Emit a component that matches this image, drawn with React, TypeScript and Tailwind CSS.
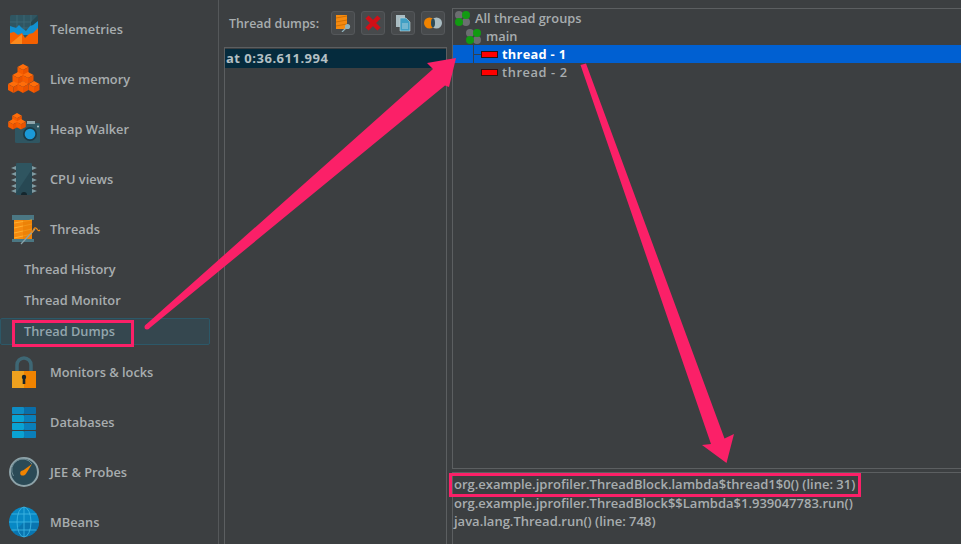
import React from "react";

const Cube = ({ x, y, s = 5.5 }: { x: number; y: number; s?: number }) => (
  <g>
    <polygon points={`${x},${y} ${x + s},${y + s * 0.55} ${x},${y + s * 1.1} ${x - s},${y + s * 0.55}`} fill="#ff6d0a" />
    <polygon points={`${x - s},${y + s * 0.55} ${x},${y + s * 1.1} ${x},${y + s * 2.2} ${x - s},${y + s * 1.65}`} fill="#f65c00" />
    <polygon points={`${x + s},${y + s * 0.55} ${x},${y + s * 1.1} ${x},${y + s * 2.2} ${x + s},${y + s * 1.65}`} fill="#ea5300" />
  </g>
);

const Telemetries = () => (
  <svg width="32" height="32" viewBox="0 0 32 32">
    <rect x="2" y="2" width="28" height="29" rx="1.5" fill="#2f5662" />
    <path d="M2 9H30M2 15H30M9 2V20M16 2V20M23 2V20" stroke="#3f6a76" strokeWidth="0.8" />
    <path d="M30 2V9L23 16V9Z" fill="#274750" />
    <path d="M2 13L8 15L11 12L14 15L18 18L22 13L25 12L30 8V22H2Z" fill="#1290cf" />
    <path d="M2 20L6 19L10 22L14 20L17 25L21 21L25 20L30 15V29.5Q30 31 28.5 31H3.5Q2 31 2 29.5Z" fill="#f46000" />
    <path d="M2 31L14 21V31Z" fill="#fb8a1d" />
  </svg>
);

const LiveMemory = () => (
  <svg width="32" height="32" viewBox="0 0 32 32">
    <Cube x={15} y={1} />
    <Cube x={10} y={9} />
    <Cube x={20} y={9} />
    <Cube x={5.5} y={18} />
    <Cube x={15} y={18} />
    <Cube x={26} y={18} />
  </svg>
);

const HeapWalker = () => (
  <svg width="32" height="32" viewBox="0 0 32 32">
    <rect x="7" y="10" width="25" height="20" rx="1.5" fill="#2f5662" />
    <rect x="19" y="8" width="8" height="3" fill="#8fa5ab" />
    <Cube x={9} y={0} s={4.8} />
    <Cube x={5} y={6} s={4.8} />
    <Cube x={13} y={6} s={4.8} />
    <circle cx="22" cy="21" r="7" fill="#1c3b47" />
    <circle cx="22" cy="21" r="5.3" fill="#1a9ad8" />
    <circle cx="30" cy="13.5" r="1" fill="#b9c7cb" />
  </svg>
);

const Cpu = () => (
  <svg width="32" height="32" viewBox="0 0 32 32">
    <rect x="8" y="0" width="16" height="32" rx="1" fill="#2f5560" />
    <path d="M24 0V6L8 30V32H24Z" fill="#24434e" opacity="0.7" />
    <path d="M13 32A3 3 0 0 1 19 32Z" fill="#14262d" />
    {[3, 9, 15, 21, 26].map((y) => (
      <g key={y} fill="#7f9ba2">
        <polygon points={`8,${y} 8,${y + 4} 3,${y + 2}`} />
        <polygon points={`24,${y} 24,${y + 4} 29,${y + 2}`} />
      </g>
    ))}
  </svg>
);

const Threads = () => (
  <svg width="32" height="32" viewBox="0 0 32 32">
    <rect x="0" y="2" width="22" height="5" fill="#4b7783" />
    <rect x="0" y="26" width="22" height="3" fill="#4b7783" />
    <rect x="2" y="7" width="18" height="19" fill="#f58a0f" />
    <path d="M2 10L20 7M2 15L20 11M2 20L20 16M2 25L20 21" stroke="#ffb02e" strokeWidth="1" />
    <rect x="11" y="7" width="9" height="19" fill="#e67a00" opacity="0.5" />
    <path d="M9 31L23 16" stroke="#8aa3aa" strokeWidth="1.2" />
    <path d="M20 20C22 16 22 13 25 16C26 18 27 18 28 17" stroke="#f58a0f" strokeWidth="1.2" fill="none" />
  </svg>
);

const Lock = () => (
  <svg width="32" height="32" viewBox="0 0 32 32">
    <path d="M5 15V9A7 7 0 0 1 19 9V15" fill="none" stroke="#3e6774" strokeWidth="3.5" />
    <rect x="0" y="15" width="12" height="17" fill="#eda11f" />
    <rect x="12" y="15" width="12" height="17" fill="#f08300" />
    <circle cx="12" cy="21" r="2.2" fill="#16242b" />
    <rect x="10.7" y="22" width="2.6" height="6" fill="#16242b" />
  </svg>
);

const Database = () => (
  <svg width="32" height="32" viewBox="0 0 32 32">
    {[1, 9, 17, 25].map((y, i) => (
      <g key={y}>
        <rect x="0" y={y} width="12" height="7" rx="0.8" fill={i === 0 ? "#0d8cc4" : "#0aa2d2"} />
        <rect x="12" y={y} width="12" height="7" rx="0.8" fill={i === 0 ? "#0a6ea8" : "#0a7fba"} />
      </g>
    ))}
  </svg>
);

const Gauge = () => (
  <svg width="32" height="32" viewBox="0 0 32 32">
    <circle cx="15" cy="16" r="14" fill="#2b4a56" stroke="#8ea3a9" strokeWidth="2" />
    <path d="M4.5 20A11 11 0 0 1 23 8" fill="none" stroke="#6d8a93" strokeWidth="1" />
    <path d="M23 8L16.5 18.5L12 16Z" fill="#f08300" />
    <circle cx="13.8" cy="17" r="2.6" fill="#f08300" />
  </svg>
);

const Globe = () => (
  <svg width="32" height="32" viewBox="0 0 32 32">
    <circle cx="15" cy="16" r="15" fill="#0888c4" />
    <path d="M15 16L4.5 26.5A15 15 0 0 0 30 16Z" fill="#0a6ea8" opacity="0.7" />
    <g fill="none" stroke="#3cb4e2" strokeWidth="0.9">
      <ellipse cx="15" cy="16" rx="7" ry="15" />
      <path d="M15 1V31M0 16H30M2.5 8H27.5M2.5 24H27.5" />
    </g>
  </svg>
);

const items1 = [
  { label: "Telemetries", icon: <Telemetries /> },
  { label: "Live memory", icon: <LiveMemory /> },
  { label: "Heap Walker", icon: <HeapWalker /> },
  { label: "CPU views", icon: <Cpu /> },
  { label: "Threads", icon: <Threads />, x: "ml-[12px]" },
];
const items2 = [
  { label: "Monitors & locks", icon: <Lock />, x: "ml-[12px]" },
  { label: "Databases", icon: <Database />, x: "ml-[12px]" },
  { label: "JEE & Probes", icon: <Gauge />, x: "ml-[9px]" },
  { label: "MBeans", icon: <Globe />, x: "ml-[9px]" },
];

const NavItem = ({ label, icon, x = "ml-[8px]" }: { label: string; icon: React.ReactNode; x?: string }) => (
  <div className="flex h-[50px] shrink-0 items-center">
    <div className="w-[50px] shrink-0">
      <div className={`w-[32px] ${x}`}>{icon}</div>
    </div>
    <span className="whitespace-nowrap pt-[2px]">{label}</span>
  </div>
);

const ToolButton = ({ children }: { children: React.ReactNode }) => (
  <div className="flex h-[24px] w-[24px] items-center justify-center rounded-[3px] border border-[#54575a] bg-[#474a4c]">
    {children}
  </div>
);

const GroupIcon = () => (
  <svg width="15" height="15" viewBox="0 0 15 15">
    <circle cx="4" cy="4" r="4" fill="#6b6e70" />
    <circle cx="11" cy="11" r="4" fill="#6b6e70" />
    <circle cx="11" cy="4" r="4" fill="#129a12" />
    <circle cx="4" cy="11" r="4" fill="#129a12" />
  </svg>
);

const RedBar = () => <div className="h-[7px] w-[17px] shrink-0 border border-[#33120f] bg-[#ff0000]" />;

export default function App() {
  return (
    <div
      className="relative flex h-[544px] w-[961px] overflow-hidden bg-[#3c3f41] text-[12.8px] font-semibold text-[#a8adaf] antialiased"
      style={{ fontFamily: '"Open Sans", "Noto Sans", sans-serif' }}
    >
      {/* sidebar */}
      <aside className="flex h-[544px] w-[219px] shrink-0 flex-col border-r border-[#55585a] pt-[4px]">
        {items1.map((i) => (
          <NavItem key={i.label} {...i} />
        ))}
        <div className="flex h-[31px] shrink-0 items-center pl-[24px]">Thread History</div>
        <div className="flex h-[31px] shrink-0 items-center pl-[24px]">Thread Monitor</div>
        <div className="flex h-[31px] shrink-0 items-center">
          <div className="flex h-[27px] w-[210px] items-center rounded-[2px] border border-[#2c5868] bg-[#35474f] pl-[23px] text-[#93a6ad]">
            Thread Dumps
          </div>
        </div>
        {items2.map((i) => (
          <NavItem key={i.label} {...i} />
        ))}
      </aside>

      {/* dumps list */}
      <section className="ml-[5px] flex w-[223px] shrink-0 flex-col">
        <div className="flex h-[47px] shrink-0 items-center pb-[1px] pl-[5px]">
          <span className="w-[102px] whitespace-nowrap pt-[2px] text-[12.4px]">Thread dumps:</span>
          <div className="flex gap-[6px]">
            <ToolButton>
              <svg width="18" height="18" viewBox="0 0 18 18">
                <rect x="2" y="1" width="11" height="14" fill="#f58a0f" />
                <path d="M2 4L13 2M2 8L13 6M2 12L13 10" stroke="#c66a00" strokeWidth="0.8" />
                <circle cx="13.5" cy="12.5" r="2.6" fill="#8fb3bd" />
                <path d="M11.5 14.5L8 18" stroke="#8fb3bd" strokeWidth="1.2" />
              </svg>
            </ToolButton>
            <ToolButton>
              <svg width="18" height="18" viewBox="0 0 18 18">
                <path d="M3 3L15 15M15 3L3 15" stroke="#d10f17" strokeWidth="4.5" />
              </svg>
            </ToolButton>
            <ToolButton>
              <svg width="18" height="18" viewBox="0 0 18 18">
                <rect x="2" y="1" width="9" height="12" fill="#a9bcc2" />
                <path d="M6 4H12L16 8V17H6Z" fill="#3f9fc4" stroke="#c7d6da" strokeWidth="0.6" />
                <path d="M8 10H14M8 12H14M8 14H14" stroke="#d5e3e7" strokeWidth="0.7" />
              </svg>
            </ToolButton>
            <ToolButton>
              <svg width="18" height="14" viewBox="0 0 18 14">
                <circle cx="5.5" cy="7" r="5.5" fill="#f08300" />
                <circle cx="12.5" cy="7" r="5.5" fill="#a9bcc2" />
                <ellipse cx="9" cy="7" rx="2" ry="4.4" fill="#2c4a56" />
              </svg>
            </ToolButton>
          </div>
        </div>
        <div className="flex-1 border-x border-t border-[#5c5f61] pt-[1px]">
          <div className="flex h-[19px] items-center bg-[#052b3d] pl-[1px] pt-[1px] text-[13px] font-bold tracking-[0.5px] text-[#b4c0c4]">
            at 0:36.611.994
          </div>
        </div>
      </section>

      {/* right column */}
      <section className="ml-[5px] flex min-w-0 flex-1 flex-col pt-[8px]">
        <div className="h-[461px] shrink-0 border-y border-l border-[#5c5f61]">
          <div className="flex h-[18px] items-center pl-[2px]">
            <GroupIcon />
            <span className="ml-[5px] pt-[2px]">All thread groups</span>
          </div>
          <div className="flex h-[18px] items-center pl-[13px]">
            <GroupIcon />
            <span className="ml-[5px] pt-[2px]">main</span>
          </div>
          <div className="relative flex h-[18px] items-center bg-[#0060d2] pl-[28px] text-white">
            <div className="absolute left-[20px] top-0 h-[18px] w-px bg-[#33404d]" />
            <div className="absolute left-[20px] top-[9px] h-px w-[8px] bg-[#33404d]" />
            <RedBar />
            <span className="ml-[4px] pt-[2px] font-bold tracking-[0.3px]">thread - 1</span>
          </div>
          <div className="flex h-[18px] items-center pl-[28px]">
            <RedBar />
            <span className="ml-[4px] pt-[2px] tracking-[0.6px]">thread - 2</span>
          </div>
        </div>
        <div className="mt-[3px] flex-1 border-l border-t border-[#5c5f61] pl-[1px] pt-[2px] text-[13px]">
          <div className="h-[18.5px] leading-[18.5px] whitespace-nowrap">org.example.jprofiler.ThreadBlock.lambda$thread1$0() (line: 31)</div>
          <div className="h-[18.5px] leading-[18.5px] whitespace-nowrap">org.example.jprofiler.ThreadBlock$$Lambda$1.939047783.run()</div>
          <div className="h-[18.5px] leading-[18.5px] whitespace-nowrap">java.lang.Thread.run() (line: 748)</div>
        </div>
      </section>

      {/* annotations */}
      <div className="absolute left-[12px] top-[320px] h-[27px] w-[122px] border-[3px] border-[#fb2068]" />
      <div className="absolute left-[449px] top-[473px] h-[24px] w-[412px] border-[3px] border-[#fb2068]" />
      <svg className="absolute left-0 top-0" width="961" height="544" viewBox="0 0 961 544">
        <path d="M145.5 325L148.5 329L445 85.5L449 87L456 58L427 63L433 69Z" fill="#fb2068" />
        <circle cx="147" cy="327" r="2.5" fill="#fb2068" />
        <path d="M580.5 65L586 63.5L724.5 438.5L734 434L726.5 463L702 445L711 444Z" fill="#fb2068" />
      </svg>
    </div>
  );
}
